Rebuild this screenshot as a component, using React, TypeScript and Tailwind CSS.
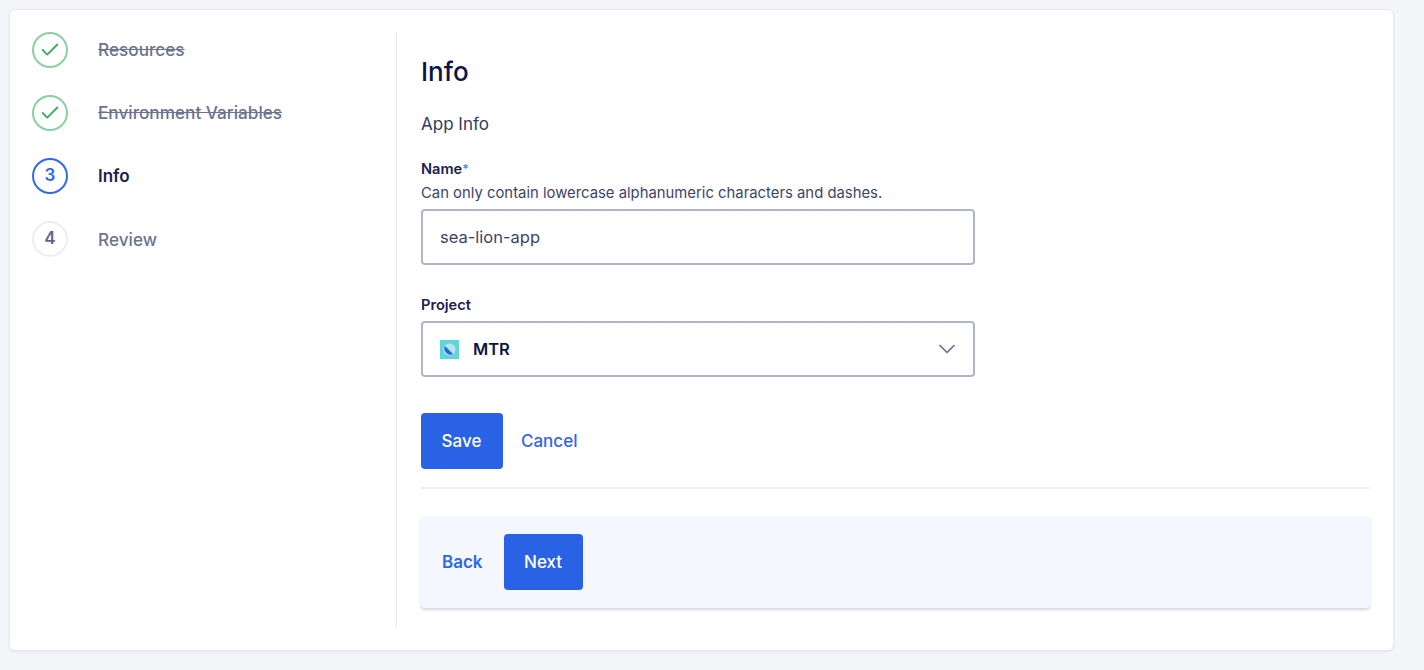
import { Check, ChevronDown } from 'lucide-react';

const font = "font-['Inter','Liberation_Sans',sans-serif]";

function StepDone({ label }: { label: string }) {
  return (
    <div className="flex items-center h-[35px]">
      <div className="w-[36px] h-[36px] rounded-full border-2 border-[#8ccfa2] flex items-center justify-center text-[#3fa960]">
        <Check size={22} strokeWidth={2} className="mt-[1px]" />
      </div>
      <span className="ml-[30px] text-[17.2px] font-medium text-[#6a7390] line-through">{label}</span>
    </div>
  );
}

function ProjectIcon() {
  return (
    <svg width="19" height="19" viewBox="0 0 19 19">
      <rect width="19" height="19" fill="#62d6d6" />
      <circle cx="9.5" cy="9.5" r="6" fill="#b9e6ee" />
      <path d="M5 6 L13 14 A6 6 0 0 1 5 6 Z" fill="#2a62e5" />
    </svg>
  );
}

export default function App() {
  return (
    <div className={`${font} w-[1424px] h-[670px] overflow-hidden bg-[#f3f5f9] pt-[9px] pl-[9px]`}>
      <div className="w-[1385px] h-[642px] bg-white rounded-[6px] border border-[#e6e8ee] shadow-[0_1px_2px_rgba(30,40,80,0.08)] flex pt-[22px]">
        {/* Steps */}
        <div className="w-[387px] h-[595px] border-r border-[#e4e6ec] pl-[22px] flex flex-col gap-[28px]">
          <StepDone label="Resources" />
          <StepDone label="Environment Variables" />
          <div className="flex items-center h-[35px]">
            <div className="w-[36px] h-[36px] rounded-full border-2 border-[#3269ea] flex items-center justify-center text-[#3269ea] text-[17px] font-semibold">
              3
            </div>
            <span className="ml-[30px] mt-[2px] text-[17px] font-semibold text-[#1b2150]">Info</span>
          </div>
          <div className="flex items-center h-[35px]">
            <div className="w-[36px] h-[36px] rounded-full border-2 border-[#eceef2] flex items-center justify-center text-[#5d6785] text-[17px] font-semibold">
              4
            </div>
            <span className="ml-[30px] mt-[2px] text-[17.2px] font-medium text-[#6a7390]">Review</span>
          </div>
        </div>

        {/* Form */}
        <div className="w-[973px] pl-[24px]">
          <h1 className="mt-[20px] text-[26px] leading-[40px] font-medium text-[#0b1447]">Info</h1>
          <p className="mt-[20px] text-[17px] leading-[24px] text-[#33395f]">App Info</p>
          <label className="block mt-[23px] text-[14.6px] leading-[20px] font-semibold text-[#1b2150]">
            Name<span className="text-[12px] align-top text-[#3f8cf0]">*</span>
          </label>
          <p className="mt-[4px] text-[14.85px] leading-[20px] text-[#3d4468]">
            Can only contain lowercase alphanumeric characters and dashes.
          </p>
          <div className="mt-[6px] w-[554px] h-[56px] rounded-[4px] border-2 border-[#b0b6ca] flex items-center pl-[17px] text-[16.5px] text-[#3d4468]">
            sea-lion-app
          </div>
          <label className="block mt-[30px] text-[14.6px] leading-[20px] font-semibold text-[#1b2150]">Project</label>
          <div className="mt-[6px] w-[554px] h-[56px] rounded-[4px] border-2 border-[#b0b6ca] flex items-center pl-[17px] pr-[12px]">
            <ProjectIcon />
            <span className="ml-[14px] text-[16.5px] font-semibold text-[#0b1447]">MTR</span>
            <ChevronDown size={28} strokeWidth={1.5} className="ml-auto text-[#6a7390]" />
          </div>
          <div className="mt-[36px] flex items-center">
            <button className="w-[82px] h-[56px] pt-[1px] pr-[1px] rounded-[4px] bg-[#2a62e5] text-white text-[17px] font-medium">Save</button>
            <a className="ml-[18px] mt-[2px] text-[17px] font-medium text-[#2f66e6]">Cancel</a>
          </div>
          <div className="mt-[18px] w-[949px] border-t-2 border-[#eef0f4]" />
          <div className="mt-[27px] w-[949px] h-[92px] rounded-[4px] bg-[#f4f7fe] shadow-[0_2px_3px_rgba(60,70,120,0.22)] flex items-center pl-[21px]">
            <a className="mt-[2px] text-[17px] font-semibold text-[#2f66e6]">Back</a>
            <button className="ml-[21px] w-[79px] h-[56px] pt-[1px] rounded-[4px] bg-[#2a62e5] text-white text-[17px] font-medium">Next</button>
          </div>
        </div>
      </div>
    </div>
  );
}
